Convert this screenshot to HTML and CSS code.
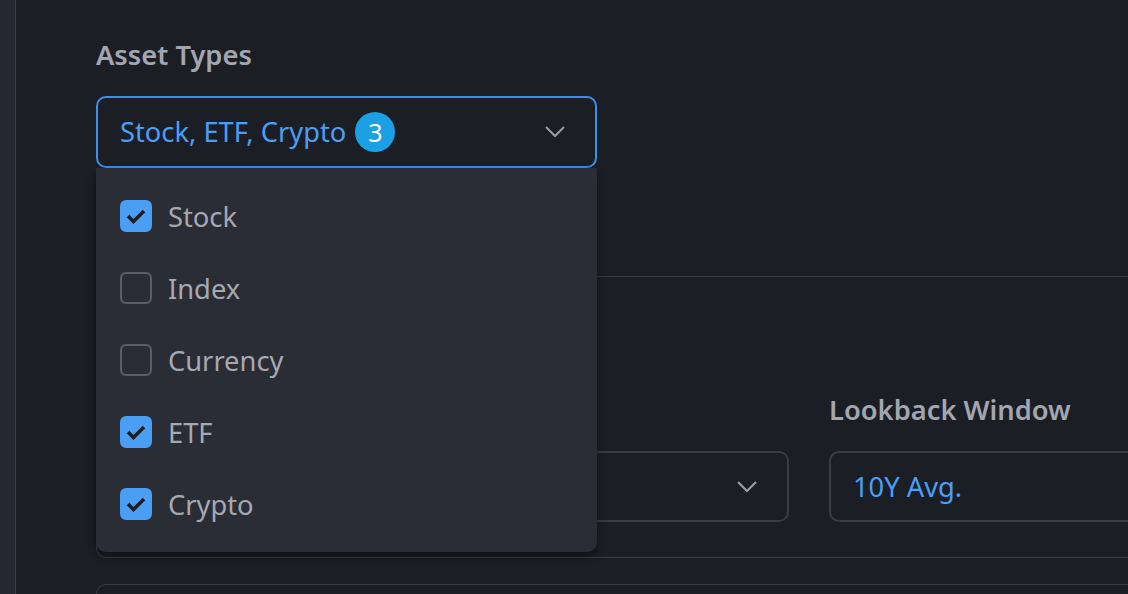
FILE: index.html
```html
<!DOCTYPE html>
<html>
<head>
<meta charset="utf-8">
<link rel="stylesheet" href="styles.css">
</head>
<body>
<div class="app">
  <aside class="sidebar"></aside>
  <main class="main">
    <div class="field">
      <div class="label">Asset Types</div>
      <div class="select-wrap">
        <div class="select active">
          <span class="value">Stock, ETF, Crypto</span>
          <span class="badge">3</span>
          <svg class="chev" width="20" height="12" viewBox="0 0 20 12"><path d="M1 1 L10 10 L19 1" fill="none" stroke="#9a9da6" stroke-width="2"/></svg>
        </div>
        <ul class="menu">
          <li class="opt"><span class="cb on"><svg width="22" height="18" viewBox="0 0 22 18"><path d="M3 9 L8.5 14.5 L19 4" fill="none" stroke="#1b1e25" stroke-width="3.6"/></svg></span>Stock</li>
          <li class="opt"><span class="cb"></span>Index</li>
          <li class="opt"><span class="cb"></span>Currency</li>
          <li class="opt"><span class="cb on"><svg width="22" height="18" viewBox="0 0 22 18"><path d="M3 9 L8.5 14.5 L19 4" fill="none" stroke="#1b1e25" stroke-width="3.6"/></svg></span>ETF</li>
          <li class="opt"><span class="cb on"><svg width="22" height="18" viewBox="0 0 22 18"><path d="M3 9 L8.5 14.5 L19 4" fill="none" stroke="#1b1e25" stroke-width="3.6"/></svg></span>Crypto</li>
        </ul>
      </div>
    </div>
    <section class="card">
      <div class="grid">
        <div class="col">
          <div class="label">&nbsp;</div>
          <div class="select plain">
            <svg class="chev" width="20" height="12" viewBox="0 0 20 12"><path d="M1 1 L10 10 L19 1" fill="none" stroke="#9a9da6" stroke-width="2"/></svg>
          </div>
        </div>
        <div class="col">
          <div class="label">Lookback Window</div>
          <div class="select plain">
            <span class="value">10Y Avg.</span>
          </div>
        </div>
      </div>
    </section>
    <section class="card next"></section>
  </main>
</div>
</body>
</html>
```
FILE: styles.css
```css
* { box-sizing: border-box; }
html, body { margin: 0; padding: 0; }
body {
  background: #1b1e25;
  font-family: "Noto Sans", "Open Sans", sans-serif;
  font-size: 27.3px;
  width: 1128px;
  height: 594px;
  overflow: hidden;
}
.app { display: flex; height: 594px; }
.sidebar {
  width: 16px;
  flex: none;
  background: #252831;
  border-right: 1px solid #3b3e45;
}
.main {
  flex: 1;
  padding: 35px 0 0 80px;
  overflow: hidden;
}
.label {
  font-weight: 600;
  color: #a3a6b0;
  line-height: 40px;
  margin-bottom: 21px;
  white-space: nowrap;
}
.select-wrap {
  position: relative;
  width: 501px;
  z-index: 2;
}
.select {
  height: 72px;
  border-radius: 10px;
  display: flex;
  align-items: center;
  padding: 0 30px 0 22px;
  line-height: 40px;
  color: #4a9ff5;
  background: #1b1e25;
}
.select.active { border: 2px solid #3b8ff0; }
.select.plain { border: 2px solid #393c43; height: 71px; }
.value { white-space: nowrap; }
.badge {
  width: 40px;
  height: 40px;
  border-radius: 50%;
  background: #1aa0e3;
  color: #fff;
  font-size: 25px;
  display: flex;
  align-items: center;
  justify-content: center;
  margin-left: 9px;
}
.chev { margin-left: auto; flex: none; }
.menu {
  position: absolute;
  top: 100%;
  left: 0;
  width: 501px;
  margin: 0;
  padding: 12px 0;
  list-style: none;
  background: #2a2d36;
  border-radius: 0 0 10px 10px;
  box-shadow: 0 4px 8px rgba(0,0,0,0.45);
}
.opt {
  height: 72px;
  display: flex;
  align-items: center;
  gap: 16px;
  padding-left: 24px;
  color: #a6a9b2;
}
.cb {
  width: 32px;
  height: 32px;
  border-radius: 6px;
  border: 2px solid #5b5e66;
  display: flex;
  align-items: center;
  justify-content: center;
  flex: none;
}
.cb.on { background: #4a9ff5; border-color: #4a9ff5; }
.card {
  margin-top: 108px;
  width: 1500px;
  border: 1px solid #393c42;
  border-radius: 10px;
  padding: 113px 0 35px 23px;
}
.grid {
  display: grid;
  grid-template-columns: 669px 669px;
  column-gap: 40px;
}
.card.next {
  margin-top: 26px;
  height: 100px;
  padding: 0;
}
```
